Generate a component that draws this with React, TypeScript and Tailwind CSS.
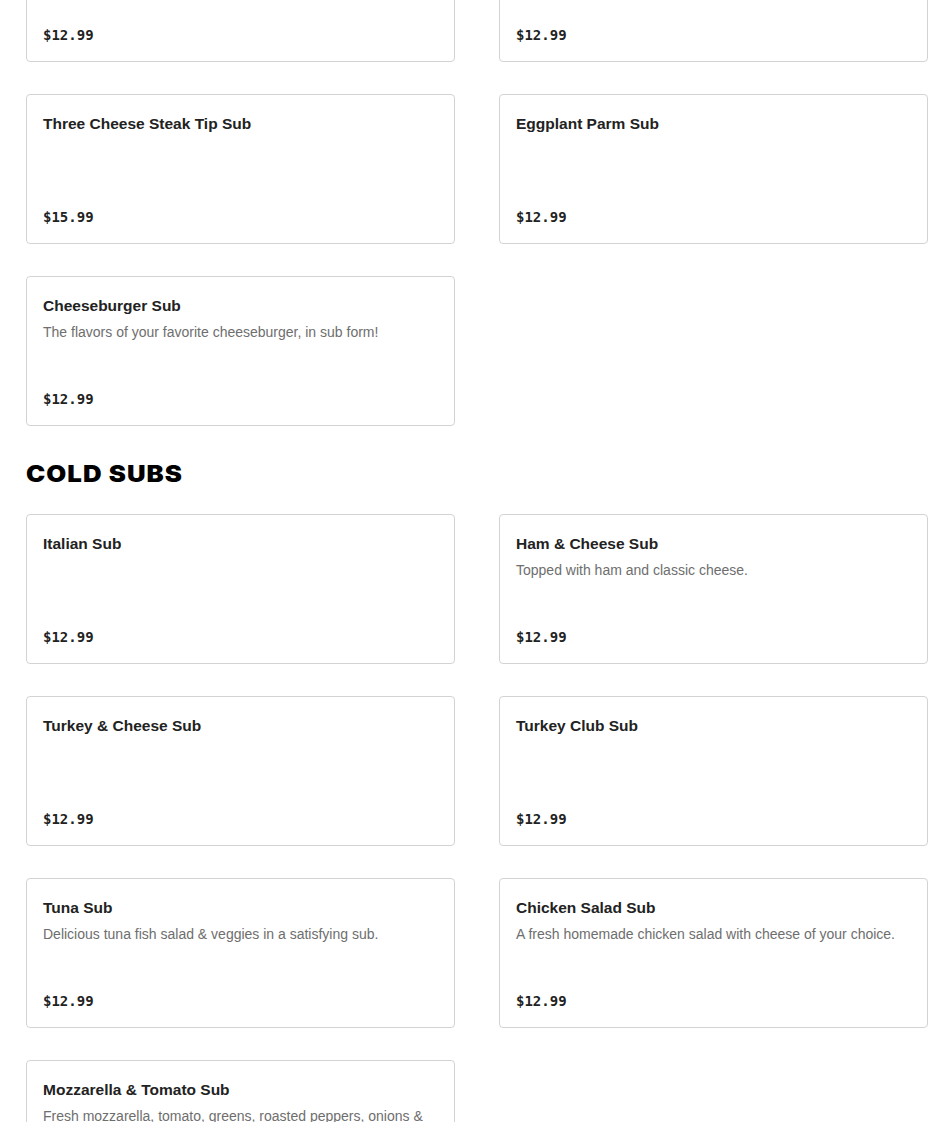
type Item = { name: string; desc?: string; price: string };

const hotSubs: Item[] = [
  { name: "Chicken Parm Sub", price: "$12.99" },
  { name: "Meatball Parm Sub", price: "$12.99" },
  { name: "Three Cheese Steak Tip Sub", price: "$15.99" },
  { name: "Eggplant Parm Sub", price: "$12.99" },
  {
    name: "Cheeseburger Sub",
    desc: "The flavors of your favorite cheeseburger, in sub form!",
    price: "$12.99",
  },
];

const coldSubs: Item[] = [
  { name: "Italian Sub", price: "$12.99" },
  { name: "Ham & Cheese Sub", desc: "Topped with ham and classic cheese.", price: "$12.99" },
  { name: "Turkey & Cheese Sub", price: "$12.99" },
  { name: "Turkey Club Sub", price: "$12.99" },
  {
    name: "Tuna Sub",
    desc: "Delicious tuna fish salad & veggies in a satisfying sub.",
    price: "$12.99",
  },
  {
    name: "Chicken Salad Sub",
    desc: "A fresh homemade chicken salad with cheese of your choice.",
    price: "$12.99",
  },
  {
    name: "Mozzarella & Tomato Sub",
    desc: "Fresh mozzarella, tomato, greens, roasted peppers, onions & balsamic glaze.",
    price: "$12.99",
  },
];

function MenuCard({ item }: { item: Item }) {
  return (
    <div className="flex min-h-[150px] flex-col justify-between rounded-[4px] border border-[#d3d3d3] bg-white px-4 pt-[17px] pb-4">
      <div>
        <h3 className="font-['Liberation_Sans',sans-serif] text-[15.5px] font-bold leading-6 text-[#222222]">
          {item.name}
        </h3>
        {item.desc && (
          <p className="mt-1 font-['Liberation_Sans',sans-serif] text-[14px] leading-5 text-[#6e6e6e]">
            {item.desc}
          </p>
        )}
      </div>
      <p className="font-['DejaVu_Sans_Mono',monospace] text-[14px] font-bold leading-5 text-[#222222]">
        {item.price}
      </p>
    </div>
  );
}

function MenuGrid({ items }: { items: Item[] }) {
  return (
    <div className="grid grid-cols-2 gap-x-[44px] gap-y-[32px]">
      {items.map((item) => (
        <MenuCard key={item.name} item={item} />
      ))}
    </div>
  );
}

export default function App() {
  return (
    <div className="min-h-screen overflow-hidden bg-white">
      <div className="ml-[26px] w-[902px] -mt-[88px] pb-10">
        <MenuGrid items={hotSubs} />
        <h2 className="mt-[34px] mb-[26px] h-[28px] origin-left scale-x-[1.12] font-['Inter',sans-serif] text-[23px] font-black uppercase leading-[28px] tracking-[0.04em] text-black">
          Cold Subs
        </h2>
        <MenuGrid items={coldSubs} />
      </div>
    </div>
  );
}
